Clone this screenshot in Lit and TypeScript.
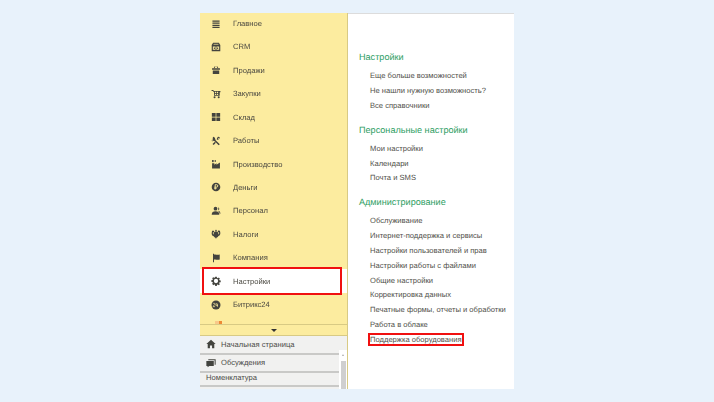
import { LitElement, html, css, svg } from "lit";
import { customElement } from "lit/decorators.js";

const ICONS: Record<string, unknown> = {
  menu: svg`<path d="M2 2h10v1.700H2zM2 5h10v1.700H2zM2 8h10v1.700H2zM2 11h10v1.700H2z"/>`,
  crm: svg`<path d="M3 1h8l2 3.200V13H1V4.200z"/><path fill="#fcec9f" d="M2.600 6.200h3.800v4.600H2.600zM7.600 6.200h3.800v4.600H7.600z"/><path fill="#fcec9f" d="M3.600 2.600h6.800v1H3.600z"/><path d="M4 7.800h1.400v2H4zM8.600 7.800h1.400v2H8.600z"/>`,
  sales: svg`<path d="M1.500 4.600h11v2.200h-11zM2.500 7.600h9v5h-9z"/><path d="M3.600 4.400 5.300 1.800h1L5 4.400zM10.400 4.400 8.700 1.800h-1L9 4.400z"/>`,
  buy: svg`<path d="M.8 1.500h2.600l.4 1.400h9.400v1.500H12.200v5.200H4.200V4.400L2.600 2.800H.8z"/><path fill="#fcec9f" d="M5.400 3.800h1.800v1.700H5.400zM8.200 3.800H10v1.700H8.200zM5.400 6.600h1.800v1.700H5.400zM8.200 6.600H10v1.700H8.200z"/><circle cx="5" cy="11.700" r="1.400"/><circle cx="10.800" cy="11.700" r="1.400"/>`,
  stock: svg`<path d="M1.200 1.500h5.300v5.100H1.200zM7.500 1.500h5.300v5.100H7.500zM1.200 7.600h5.300v5.100H1.200zM7.500 7.600h5.300v5.100H7.500z"/>`,
  work: svg`<path d="M2.600 1.600 4 1l1.500 1.700 1 3.200 5.800 5.500-1.600 1.600-5.500-5.600-3-1.100z"/><path d="M9.400 1.400c1.500-.8 3.300.5 3.100 2.300l-1.500-.9-1 .8.700 1.600c-1.100.4-2.100.2-2.800-.6zM5.500 8.200l1.300 1.300-3 3.200-1.700-1.600z"/><path d="M1 5.400 2.400 7l-1 .6z"/>`,
  prod: svg`<path d="M1.500 5.800h3.200v2.300l3-2.300v2.300l4.800-3.300v8.400h-11z"/><rect x="1.500" y="1.400" width="2.200" height="3"/><rect x="5" y="1.800" width="2" height="2"/>`,
  money: svg`<circle cx="7" cy="7" r="6"/><path fill="none" stroke="#fcec9f" stroke-width="1.300" d="M5.900 10.600V3.700h1.800a1.700 1.700 0 0 1 0 3.500H4.600M4.600 8.900h3.200"/>`,
  staff: svg`<circle cx="6.300" cy="3.700" r="2.600"/><path d="M1 12.400c0-4 2-5 5.300-5s5.300 1 5.300 5z"/><path d="M9.500 1.600a2.400 2.400 0 0 1 1 4.400l-.6-.1a4 4 0 0 0 .2-3.200zM10.700 6.900c1.600.3 2.500 1.600 2.500 4h-1.100c-.1-1.600-.7-3-2-3.600z"/>`,
  tax: svg`<path d="M7 .8l1.300 1.700-.8 1.300 1.700.6.6-2.200 2.700.3.6 3.200c0 2.600-1.400 4-3 4.300l-.9 1.400-1 .3L7 13.600 5.800 11.800l-1-.3-.9-1.400C2.300 9.800.9 8.400.9 5.800l.6-3.200 2.700-.3.6 2.200 1.700-.6-.8-1.300z"/><path fill="#fcec9f" d="M2.700 4.200h1v3h-1zM10.300 4.200h1v3h-1z"/>`,
  org: svg`<path d="M2.800 1.200h1.400V13H2.800z"/><path d="M4.200 2.200c2.400-.9 4 .9 8 0v7c-3.700.9-5.600-.9-8 0z"/>`,
  gear: svg`<path fill-rule="evenodd" d="M5.900.9h2.200l.3 1.700 1.100.5 1.400-1 1.500 1.500-1 1.400.5 1.100 1.700.3v2.200l-1.700.3-.5 1.100 1 1.400-1.500 1.500-1.400-1-1.100.5-.3 1.700H5.900l-.3-1.700-1.100-.5-1.400 1L1.600 10.900l1-1.400-.5-1.100L.4 8.100V5.900l1.700-.3.5-1.100-1-1.400L3.100 1.600l1.400 1 1.100-.5zM7 4a3 3 0 1 0 0 6 3 3 0 0 0 0-6z"/>`,
  b24: svg`<circle cx="7" cy="7" r="6.300"/><path fill="none" stroke="#fcec9f" stroke-width="1" d="M2.900 5.400c.5-1.200 2.500-1.100 2.600.2.100 1.200-2.600 2.300-2.600 3.700h2.800M7.500 4.200l-.7 3.300h3M9 5.200v4.300"/>`,
  home: svg`<path d="M7 1.200l6.500 5.800h-1.900v5.800H8.500V9H5.500v3.800H2.400V7H.5z"/>`,
  chat: svg`<path d="M3.200 1.800h10.300v7.500h-1.400V3.300H3.200z"/><path d="M.5 4.300h10.400v6.800H4.700l-2.500 2v-2H.5z"/>`,
};

const NAV: [string, string][] = [
  ["menu", "Главное"], ["crm", "CRM"], ["sales", "Продажи"], ["buy", "Закупки"],
  ["stock", "Склад"], ["work", "Работы"], ["prod", "Производство"], ["money", "Деньги"],
  ["staff", "Персонал"], ["tax", "Налоги"], ["org", "Компания"], ["gear", "Настройки"],
  ["b24", "Битрикс24"],
];

const GROUPS: [string, string[]][] = [
  ["Настройки", ["Еще больше возможностей", "Не нашли нужную возможность?", "Все справочники"]],
  ["Персональные настройки", ["Мои настройки", "Календари", "Почта и SMS"]],
  ["Администрирование", [
    "Обслуживание", "Интернет-поддержка и сервисы", "Настройки пользователей и прав",
    "Настройки работы с файлами", "Общие настройки", "Корректировка данных",
    "Печатные формы, отчеты и обработки", "Работа в облаке", "Поддержка оборудования",
  ]],
];

const icon = (name: string) =>
  html`<svg class="ico" viewBox="0 0 14 14" aria-hidden="true">${ICONS[name]}</svg>`;

@customElement("app-root")
export class AppRoot extends LitElement {
  static styles = css`
    :host {
      display: block;
      height: 402px;
      overflow: hidden;
      background: #e8f2fb;
      font-family: "Liberation Sans", Arial, sans-serif;
      text-rendering: geometricPrecision;
      color: #4a4a45;
    }
    .window {
      display: flex;
      width: 314px;
      height: 376px;
      margin-left: 200px;
      padding-top: 13px;
      filter: blur(0.45px);
    }
    .side {
      width: 148px;
      flex: none;
      display: flex;
      flex-direction: column;
      border-right: 1px solid #d8ca84;
      box-sizing: border-box;
    }
    .nav {
      position: relative;
      height: 311px;
      overflow: hidden;
      background: #fcec9f;
    }
    .item {
      display: flex;
      align-items: center;
      height: 23.43px;
      padding-left: 11px;
      font-size: 7.6px;
      color: #4a4840;
    }
    .item:first-child { margin-top: -1.2px; }
    .item.on { background: #fff; margin-right: -1px; }
    .ico { width: 10px; height: 10px; fill: #44443e; flex: none; margin-right: 12px; }
    .red {
      position: absolute;
      left: 2px;
      top: 254px;
      width: 136px;
      height: 24px;
      border: 2px solid #f01010;
    }
    .peek {
      position: absolute;
      left: 15px;
      bottom: 0;
      width: 7px;
      height: 3px;
      background: linear-gradient(90deg, #f8c98a 0 50%, #ee8a36 50%);
    }
    .more {
      height: 12px;
      background: #fcec9f;
      border-top: 1px solid #d8ca84;
      border-bottom: 1px solid #d8ca84;
      box-sizing: border-box;
      display: flex;
      justify-content: center;
      align-items: center;
    }
    .more i { border: 3px solid transparent; border-top: 3px solid #333; border-bottom: 0; }
    .open {
      flex: 1;
      position: relative;
      background: #f1f1f0;
      overflow: hidden;
      font-size: 7.6px;
    }
    .tab {
      display: flex;
      align-items: center;
      height: 18.5px;
      padding-left: 6px;
      box-sizing: border-box;
      border-bottom: 2px solid #c9c9c7;
      color: #4a4a47;
    }
    .tab .ico { margin-right: 5px; }
    .tab.plain { height: 14px; align-items: flex-start; }
    .scroll {
      position: absolute;
      right: 0;
      top: 14px;
      bottom: 0;
      width: 8px;
      background: #fff;
    }
    .scroll i {
      position: absolute;
      left: 2.5px;
      top: 4px;
      border: 1.5px solid transparent;
      border-bottom: 2px solid #aaa;
      border-top: 0;
    }
    .scroll b {
      position: absolute;
      left: 1.5px;
      right: 1.5px;
      top: 11px;
      bottom: 0;
      background: #cfcfcf;
    }
    .main {
      flex: 1;
      min-width: 0;
      background: #fff;
      border-top: 1px solid #dcdcdc;
      padding: 36px 0 0 11px;
      box-sizing: border-box;
    }
    h2 {
      margin: 0 0 5.2px;
      font-size: 9.1px;
      font-weight: 400;
      line-height: 14px;
      color: #2e9e63;
    }
    ul { list-style: none; margin: 0 0 8.8px; padding: 0 0 0 11px; }
    li {
      font-size: 7.6px;
      line-height: 14.85px;
      white-space: nowrap;
      color: #50504a;
      position: relative;
    }
    .hl::after {
      content: "";
      position: absolute;
      left: -2px;
      top: 0.4px;
      width: 92px;
      height: 9px;
      border: 2px solid #f01010;
    }
  `;

  render() {
    return html`<div class="window">
      <div class="side">
        <div class="nav">
          ${NAV.map(([i, t]) => html`<div class="item ${t === "Настройки" ? "on" : ""}">${icon(i)}<span>${t}</span></div>`)}
          <div class="peek"></div>
          <div class="red"></div>
        </div>
        <div class="more"><i></i></div>
        <div class="open">
          <div class="tab">${icon("home")}<span>Начальная страница</span></div>
          <div class="tab">${icon("chat")}<span>Обсуждения</span></div>
          <div class="tab plain"><span>Номенклатура</span></div>
          <div class="scroll"><i></i><b></b></div>
        </div>
      </div>
      <div class="main">
        ${GROUPS.map(([h, items]) => html`<h2>${h}</h2><ul>${items.map(
          (t) => html`<li class=${t === "Поддержка оборудования" ? "hl" : ""}>${t}</li>`
        )}</ul>`)}
      </div>
    </div>`;
  }
}
